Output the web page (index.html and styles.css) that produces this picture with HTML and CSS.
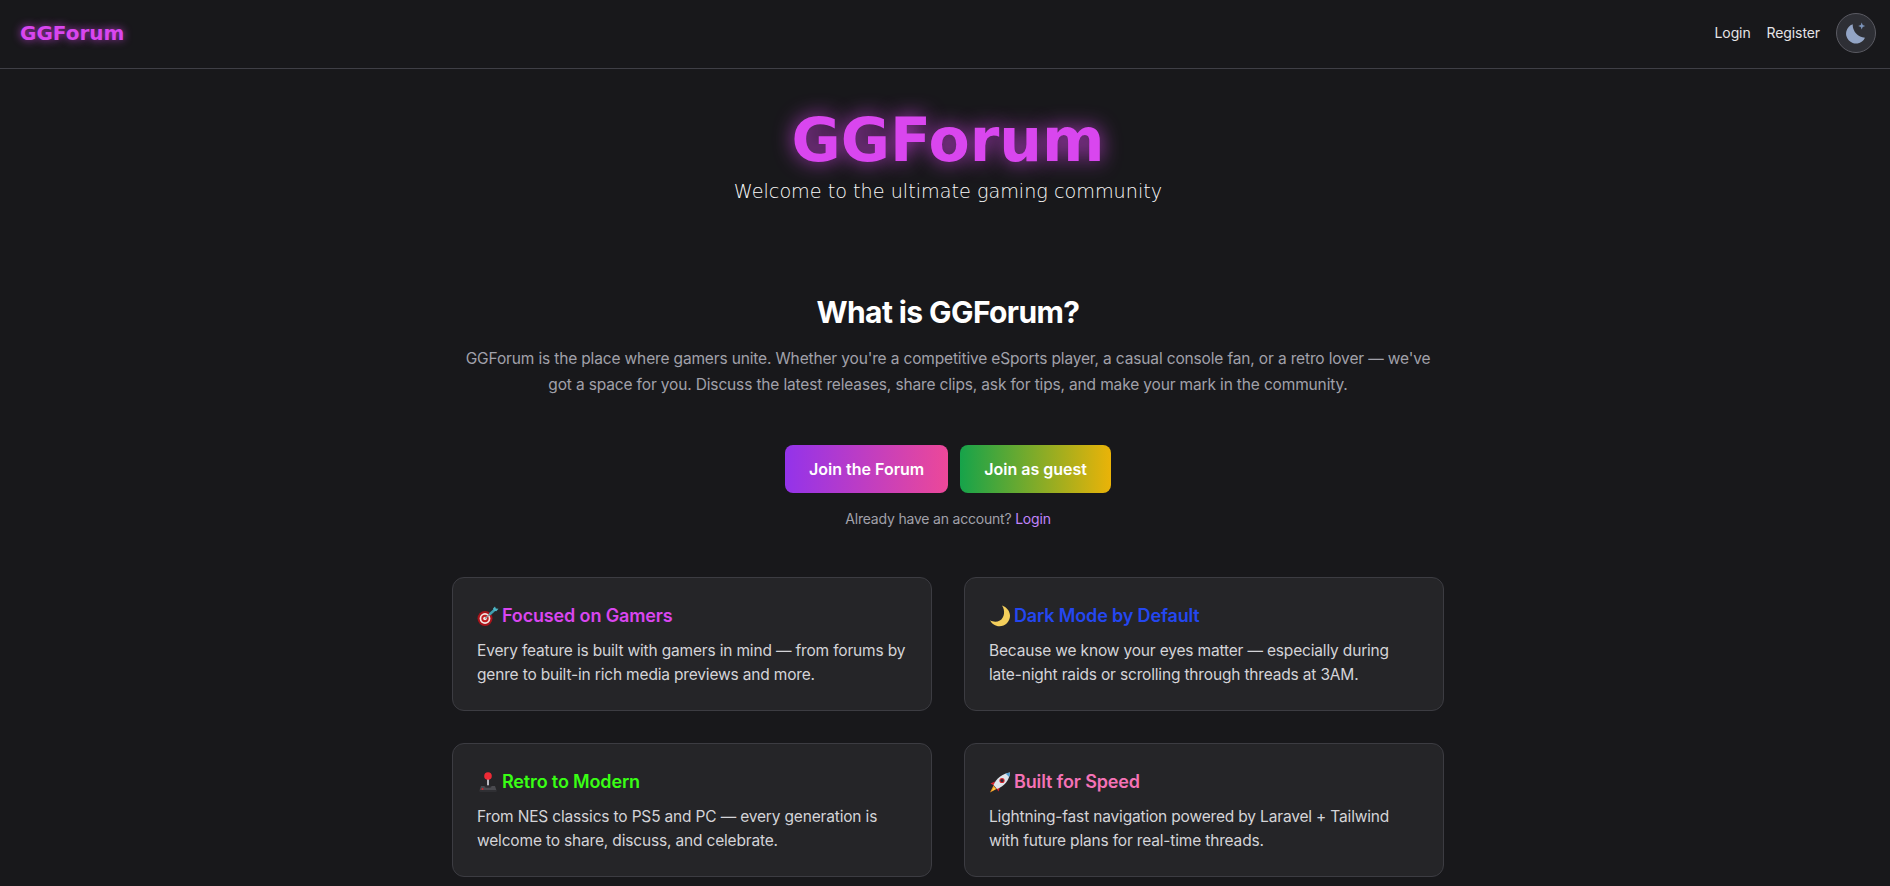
FILE: index.html
```html
<!DOCTYPE html>
<html lang="en">
<head>
<meta charset="utf-8">
<title>GGForum</title>
<link rel="stylesheet" href="styles.css">
</head>
<body>
<header class="topbar">
  <a class="logo" href="#">GGForum</a>
  <nav class="topnav">
    <a href="#">Login</a>
    <a href="#">Register</a>
    <button class="theme-toggle" aria-label="Toggle theme">
      <svg viewBox="0 0 24 24" width="24" height="24"><path class="moon" d="M8.700 3.300A9.900 9.900 0 1 0 21 16.700 13 13 0 0 1 8.700 3.300z"/><path class="star" d="M17.700 1.500l1 2.500 2.500 1-2.500 1-1 2.500-1-2.500-2.500-1 2.500-1z"/></svg>
    </button>
  </nav>
</header>
<main class="page">
  <section class="hero">
    <h1 class="hero-title">GGForum</h1>
    <p class="hero-tag">Welcome to the ultimate gaming community</p>
  </section>
  <section class="intro">
    <h2 class="intro-title">What is GGForum?</h2>
    <p class="intro-text">GGForum is the place where gamers unite. Whether you're a competitive eSports player, a casual console fan, or a retro lover — we've got a space for you. Discuss the latest releases, share clips, ask for tips, and make your mark in the community.</p>
    <div class="actions">
      <a class="btn btn-forum" href="#">Join the Forum</a>
      <a class="btn btn-guest" href="#">Join as guest</a>
    </div>
    <p class="already">Already have an account? <a href="#">Login</a></p>
  </section>
  <section class="features">
    <article class="card">
      <h3 class="card-title c-magenta"><svg class="emoji" viewBox="0 0 22 22"><circle cx="8" cy="13.500" r="7.500" fill="#a8131a"/><circle cx="8" cy="13.500" r="5.400" fill="#f3e6e2"/><circle cx="8" cy="13.500" r="3.700" fill="#c01c20"/><circle cx="8" cy="13.500" r="1.800" fill="#f3e6e2"/><path d="M8 13.500L13 9" stroke="#8a9aa0" stroke-width="1.200"/><path d="M12.500 9.500L18 4.500" stroke="#3f9fb0" stroke-width="2.400"/><path d="M16 3.500l2-2 .8 2 2.700.3-2.200 2.400-2.300-.4z" fill="#4cb6c6"/></svg>Focused on Gamers</h3>
      <p class="card-text">Every feature is built with gamers in mind — from forums by genre to built-in rich media previews and more.</p>
    </article>
    <article class="card">
      <h3 class="card-title c-blue"><svg class="emoji" viewBox="0 0 22 22"><path d="M13 .500c4.500 1.500 8 5.500 8 10.300 0 5.800-4.700 10.500-10.500 10.500-4.200 0-7.800-2.500-9.500-6 3 1.800 6.800 2 9.800.3C15.500 13 16.500 5.500 13 .500z" fill="#f4cf5c"/></svg>Dark Mode by Default</h3>
      <p class="card-text">Because we know your eyes matter — especially during late-night raids or scrolling through threads at 3AM.</p>
    </article>
    <article class="card">
      <h3 class="card-title c-green"><svg class="emoji" viewBox="0 0 22 22"><path d="M4 15h14l1.500 4.500h-17z" fill="#4a4a4f"/><rect x="2.500" y="19" width="17" height="2" fill="#2f2f33"/><rect x="10" y="6" width="2" height="10" fill="#b9b9c0"/><ellipse cx="11" cy="15.500" rx="3.500" ry="1.300" fill="#2c2c30"/><circle cx="11" cy="5" r="3.800" fill="#ee2a35"/><circle cx="5.500" cy="18" r="1" fill="#d3232b"/></svg>Retro to Modern</h3>
      <p class="card-text">From NES classics to PS5 and PC — every generation is welcome to share, discuss, and celebrate.</p>
    </article>
    <article class="card">
      <h3 class="card-title c-pink"><svg class="emoji" viewBox="0 0 22 22"><path d="M6 10.500L1.500 12.500l3.500 2z" fill="#d8232a"/><path d="M11 16l-1.500 4.500-2.500-3.500z" fill="#d8232a"/><path d="M4.500 14.500L1 21.500l6.500-3.500z" fill="#f59a23"/><path d="M4.800 16.500L3 20l3.500-2z" fill="#f7d84a"/><path d="M4.500 14C7 7.500 13.500 2.500 21 1.500c-.5 7.500-5.500 13.500-13 16.500z" fill="#dfe4ea"/><path d="M16.500 2.600c1.500-.5 3.500-1 4.500-1.100-.1 1.500-.4 3-.9 4.500z" fill="#4f9bd0"/><circle cx="13" cy="9.500" r="2.600" fill="#d8232a"/><circle cx="13" cy="9.500" r="1.500" fill="#27323c"/></svg>Built for Speed</h3>
      <p class="card-text">Lightning-fast navigation powered by Laravel + Tailwind with future plans for real-time threads.</p>
    </article>
  </section>
</main>
</body>
</html>
```
FILE: styles.css
```css
* { box-sizing: border-box; }
html, body { margin: 0; padding: 0; }
body {
  background: #18181b;
  color: #fff;
  font-family: Inter, "Liberation Sans", sans-serif;
  font-size: 16px;
  line-height: 24px;
  height: 886px;
  overflow: hidden;
}
a { text-decoration: none; color: inherit; }
.topbar {
  height: 69px;
  display: flex;
  align-items: center;
  justify-content: space-between;
  padding: 0 14px 2px 20px;
  border-bottom: 1px solid #3f3f46;
}
.logo {
  font-family: "DejaVu Sans", sans-serif;
  font-weight: 700;
  font-size: 20px;
  color: #d946ef;
  text-shadow: 0 0 8px rgba(217, 70, 239, .8);
}
.topnav { display: flex; align-items: center; gap: 16px; font-size: 14px; letter-spacing: -0.1px; color: #e4e4e7; }
.theme-toggle {
  width: 40px;
  height: 40px;
  border-radius: 50%;
  padding: 0;
  display: flex;
  align-items: center;
  justify-content: center;
  background: #2e2f35;
  border: 1px solid #5a5a62;
}
.moon { fill: #93a5c6; }
.star { fill: #7b93b8; }
.page { display: flex; flex-direction: column; align-items: center; padding-left: 6px; }
.hero { padding-top: 33px; text-align: center; }
.hero-title {
  margin: 0;
  font-family: "DejaVu Sans", sans-serif;
  font-weight: 700;
  font-size: 60px;
  line-height: 76px;
  color: #d946ef;
  text-shadow: 0 0 20px rgba(217, 70, 239, .8);
}
.hero-tag {
  margin: 0;
  font-family: "DejaVu Sans", sans-serif;
  font-weight: 200;
  font-size: 19.200px;
  line-height: 28px;
  color: #fafafa;
}
.intro { width: 992px; margin-top: 88px; text-align: center; }
.intro-title { margin: 0 0 16px; font-size: 30px; line-height: 36px; font-weight: 700; letter-spacing: -0.6px; }
.intro-text { margin: 0 auto; width: 980px; font-size: 15.500px; letter-spacing: -0.15px; line-height: 26px; color: #a1a1aa; }
.actions { display: flex; justify-content: center; gap: 12px; margin-top: 47px; }
.btn { height: 48px; display: flex; align-items: center; padding: 0 24px; border-radius: 8px; font-weight: 600; color: #fff; }
.btn-forum { background: linear-gradient(90deg, #9333ea, #ec4899); }
.btn-guest { background: linear-gradient(90deg, #16a34a, #eab308); }
.already { margin: 16px 0 0; font-size: 14px; letter-spacing: -0.2px; line-height: 20px; color: #a1a1aa; }
.already a { color: #c084fc; }
.features { width: 992px; margin-top: 48px; display: grid; grid-template-columns: 1fr 1fr; gap: 32px; }
.card {
  height: 134px;
  padding: 24px;
  background: #252528;
  border: 1px solid #3c3c42;
  border-radius: 12px;
}
.card-title {
  margin: 0 0 9px;
  font-size: 18px;
  line-height: 28px;
  font-weight: 600;
  letter-spacing: -0.15px;
  display: flex;
  align-items: center;
  gap: 3px;
}
.card-text { margin: 0; font-size: 15.500px; letter-spacing: -0.17px; color: #d4d4d8; }
.emoji { width: 22px; height: 22px; flex: none; }
.c-magenta { color: #d946ef; }
.c-blue { color: #2447f0; }
.c-green { color: #39ff14; }
.c-pink { color: #f472b6; }
```
